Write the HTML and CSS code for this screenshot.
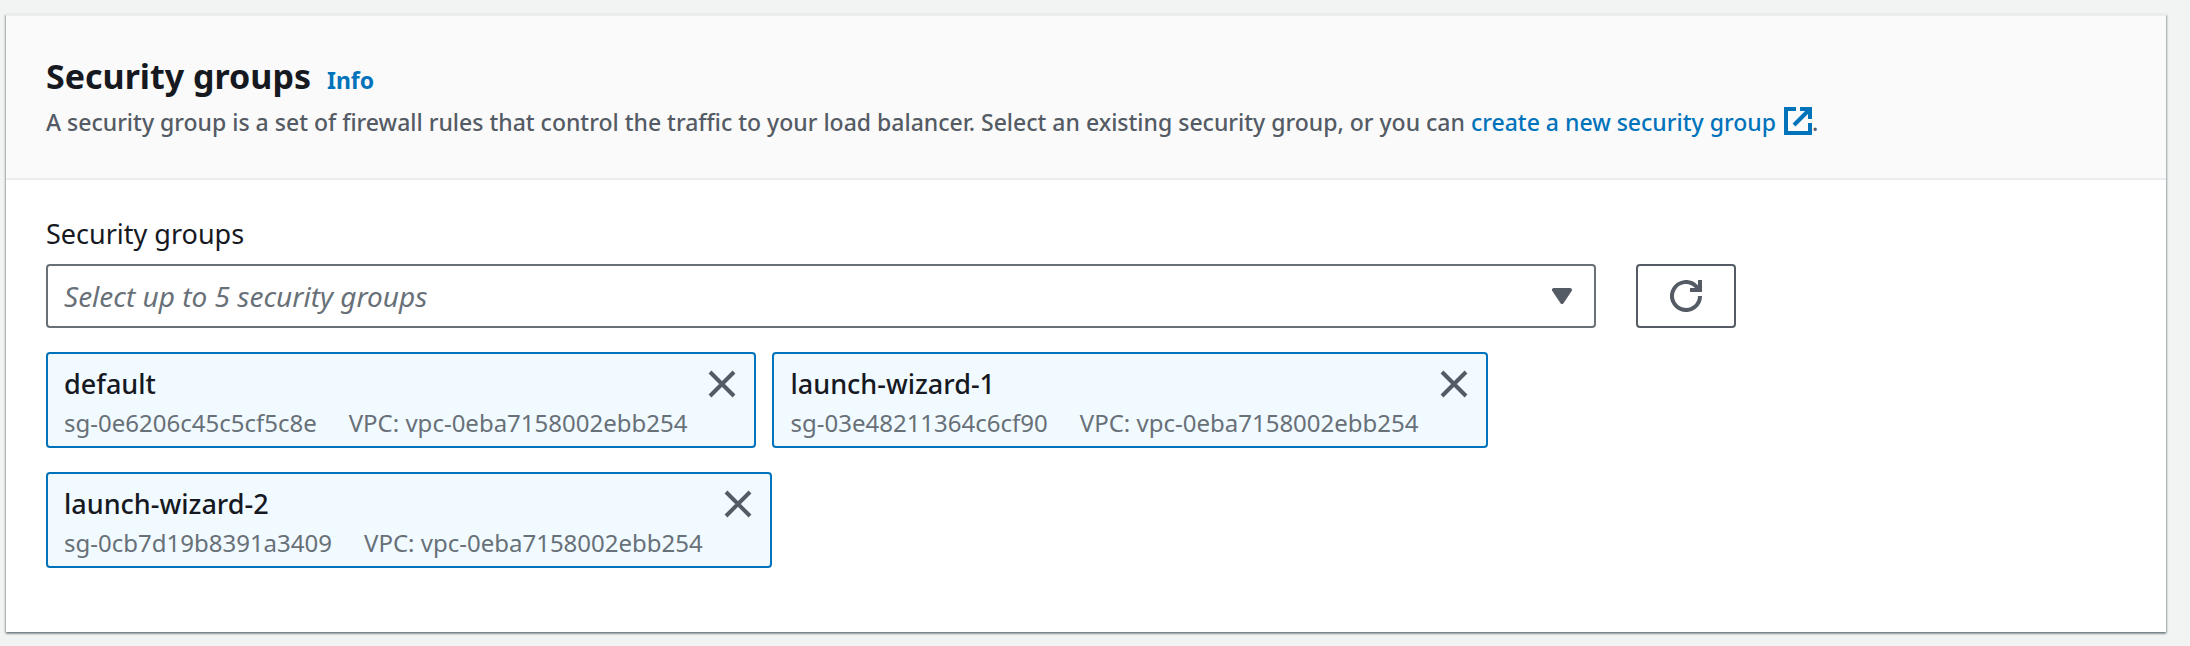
FILE: index.html
```html
<!DOCTYPE html>
<html lang="en">
<head>
<meta charset="utf-8">
<meta name="viewport" content="width=device-width, initial-scale=1">
<title>Security groups</title>
<link rel="stylesheet" href="styles.css">
</head>
<body>
<section class="card">
  <header class="card-header">
    <div class="heading">
      <h2 class="title">Security groups</h2>
      <a class="info" href="#info">Info</a>
    </div>
    <p class="description">A security group is a set of firewall rules that control the traffic to your load balancer. Select an existing security group, or you can <a class="link" href="#create">create a new security group <svg class="external" viewBox="0 0 28 28" aria-hidden="true"><path d="M12 2H2v24h24V16M16 2h10v10M25 3 10 18" fill="none" stroke="currentColor" stroke-width="4"/></svg></a>.</p>
  </header>
  <div class="card-body">
    <label class="label" for="groups">Security groups</label>
    <div class="row">
      <div class="select-wrap">
        <select class="select" id="groups">
          <option>Select up to 5 security groups</option>
        </select>
        <svg class="caret" viewBox="0 0 20 16" aria-hidden="true"><path d="M2 2h16l-8 12z" fill="currentColor" stroke="currentColor" stroke-width="4" stroke-linejoin="round"/></svg>
      </div>
      <button class="refresh" type="button" aria-label="Refresh security groups">
        <svg class="refresh-icon" viewBox="0 0 32 32" aria-hidden="true"><path d="M30 16a14 14 0 1 1-4.100-9.900L29 9.200M30 0v10H20" fill="none" stroke="currentColor" stroke-width="4"/></svg>
      </button>
    </div>
    <div class="chips">
      <div class="chip">
        <div class="chip-text">
          <span class="chip-name">default</span>
          <span class="chip-meta"><span>sg-0e6206c45c5cf5c8e</span><span>VPC: vpc-0eba7158002ebb254</span></span>
        </div>
        <button class="remove" type="button" aria-label="Remove default"><svg class="remove-icon" viewBox="0 0 28 28" aria-hidden="true"><path d="M2 2l24 24M26 2 2 26" fill="none" stroke="currentColor" stroke-width="4"/></svg></button>
      </div>
      <div class="chip">
        <div class="chip-text">
          <span class="chip-name">launch-wizard-1</span>
          <span class="chip-meta"><span>sg-03e48211364c6cf90</span><span>VPC: vpc-0eba7158002ebb254</span></span>
        </div>
        <button class="remove" type="button" aria-label="Remove launch-wizard-1"><svg class="remove-icon" viewBox="0 0 28 28" aria-hidden="true"><path d="M2 2l24 24M26 2 2 26" fill="none" stroke="currentColor" stroke-width="4"/></svg></button>
      </div>
      <div class="chip">
        <div class="chip-text">
          <span class="chip-name">launch-wizard-2</span>
          <span class="chip-meta"><span>sg-0cb7d19b8391a3409</span><span>VPC: vpc-0eba7158002ebb254</span></span>
        </div>
        <button class="remove" type="button" aria-label="Remove launch-wizard-2"><svg class="remove-icon" viewBox="0 0 28 28" aria-hidden="true"><path d="M2 2l24 24M26 2 2 26" fill="none" stroke="currentColor" stroke-width="4"/></svg></button>
      </div>
    </div>
  </div>
</section>
</body>
</html>
```
FILE: styles.css
```css
* { box-sizing: border-box; }

body {
  margin: 0;
  padding: 14px 24px 14px 6px;
  background: #f2f3f3;
  color: #16191f;
  font-family: "Noto Sans", "Open Sans", sans-serif;
  font-size: 27px;
}

.card {
  background: #fff;
  border-top: 2px solid #eaeded;
  box-shadow: 0 2px 2px 0 rgba(0, 28, 36, 0.3), 1px 1px 2px 0 rgba(0, 28, 36, 0.25), -1px 1px 2px 0 rgba(0, 28, 36, 0.25);
}

.card-header {
  padding: 36px 40px 34px;
  background: #fafafa;
  border-bottom: 2px solid #eaeded;
}

.heading {
  display: flex;
  align-items: baseline;
  gap: 16px;
}

.title {
  margin: 0;
  font-size: 34px;
  line-height: 48px;
  font-weight: 700;
}

.info {
  color: #0073bb;
  font-size: 23px;
  font-weight: 700;
  text-decoration: none;
}

.description {
  margin: 0;
  color: #545b64;
  font-size: 23px;
  font-weight: 500;
  line-height: 44px;
}

.link {
  color: #0073bb;
  text-decoration: none;
}

.external {
  width: 28px;
  height: 28px;
  margin-left: 2px;
  vertical-align: -4px;
}

.card-body {
  padding: 34px 40px 64px;
}

.label {
  display: block;
  margin-bottom: 10px;
  line-height: 40px;
}

.row {
  display: flex;
  gap: 40px;
}

.select-wrap {
  display: grid;
  align-items: center;
  width: calc(75% - 10px);
}

.select,
.caret {
  grid-area: 1 / 1;
}

.select {
  appearance: none;
  width: 100%;
  height: 64px;
  padding: 0 56px 0 16px;
  border: 2px solid #687078;
  border-radius: 4px;
  background: #fff;
  color: #687078;
  font: italic 28px "Noto Sans", "Open Sans", sans-serif;
}

.caret {
  justify-self: end;
  width: 20px;
  height: 16px;
  margin-right: 24px;
  color: #545b64;
  pointer-events: none;
}

.refresh {
  display: grid;
  place-items: center;
  width: 100px;
  height: 64px;
  padding: 0;
  border: 2px solid #545b64;
  border-radius: 4px;
  background: #fff;
  color: #545b64;
}

.refresh-icon {
  width: 32px;
  height: 32px;
}

.chips {
  display: flex;
  flex-wrap: wrap;
  gap: 24px 16px;
  width: calc(75% - 10px);
  margin-top: 24px;
}

.chip {
  display: flex;
  align-items: flex-start;
  gap: 21px;
  padding: 8px 18px 6px 16px;
  border: 2px solid #0073bb;
  border-radius: 4px;
  background: #f1faff;
}

.chip-text {
  display: flex;
  flex-direction: column;
}

.chip-name {
  font-weight: 500;
  line-height: 44px;
}

.chip-meta {
  display: flex;
  gap: 32px;
  color: #687078;
  font-size: 24px;
  line-height: 34px;
}

.remove {
  display: grid;
  padding: 8px 0;
  border: 0;
  background: none;
  color: #545b64;
}

.remove-icon {
  width: 28px;
  height: 28px;
}
```
